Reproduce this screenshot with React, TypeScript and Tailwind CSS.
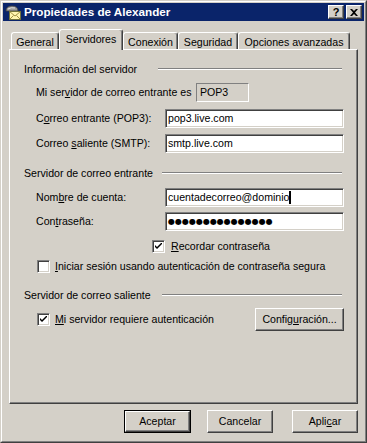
import React from "react";

const raised =
  "border border-t-white border-l-white border-r-[#404040] border-b-[#404040] shadow-[inset_-1px_-1px_0_#808080]";
const sunken =
  "border border-t-[#808080] border-l-[#808080] border-r-white border-b-white shadow-[inset_1px_1px_0_#404040,inset_-1px_-1px_0_#d4d0c8]";

const tabs = [
  { label: "General", cls: "w-[48px] ml-[2px]" },
  { label: "Servidores", cls: "w-[64px]", active: true },
  { label: "Conexión", cls: "w-[55px]" },
  { label: "Seguridad", cls: "w-[60px]" },
  { label: "Opciones avanzadas", cls: "w-[112px]" },
];

const MailIcon = () => (
  <svg width="16" height="16" viewBox="0 0 16 16">
    <path d="M1 7 Q1 2 7 2 Q13 2 13 7 Z" fill="#9a9a9a" stroke="#404040" strokeWidth="0.8" />
    <path d="M3 5 Q6 3 10 4" stroke="#e0e0e0" strokeWidth="1" fill="none" />
    <rect x="4.5" y="7.5" width="11" height="8" fill="#fff6b0" stroke="#6b6b2a" strokeWidth="0.8" />
    <path d="M4.5 7.5 L10 12 L15.5 7.5 M4.5 15.5 L8.5 11.5 M15.5 15.5 L11.5 11.5" stroke="#8a7a2a" strokeWidth="0.8" fill="none" />
  </svg>
);

const Check = () => (
  <svg width="7" height="7" viewBox="0 0 7 7">
    <path d="M0 2 L0 4 L2 6 L7 1 L7 -1 L2 4 Z" fill="#000" />
  </svg>
);

const Checkbox = ({ checked }: { checked?: boolean }) => (
  <div className={`w-[13px] h-[13px] shrink-0 bg-white flex items-center justify-center ${sunken}`}>
    {checked && <Check />}
  </div>
);

const GroupHeader = ({ label, line, mt }: { label: string; line: string; mt: string }) => (
  <div className={`flex items-center h-[14px] pl-[14px] ${mt}`}>
    <span className="whitespace-nowrap">{label}</span>
    <div className={`ml-auto mr-[15px] h-[2px] border-t border-t-[#808080] border-b border-b-white ${line}`} />
  </div>
);

const Field = ({ children }: { children: React.ReactNode }) => (
  <div className={`w-[179px] h-[19px] bg-white flex items-center pl-[2px] whitespace-nowrap ${sunken}`}>{children}</div>
);

export default function App() {
  return (
    <div
      className="w-[367px] h-[443px] bg-[#d4d0c8] border border-t-[#d4d0c8] border-l-[#d4d0c8] border-r-[#404040] border-b-[#404040] text-[10.6px] text-black leading-none"
      style={{ fontFamily: '"Liberation Sans", Arial, sans-serif' }}
    >
      <div className="h-full border border-t-white border-l-white border-r-[#808080] border-b-[#808080] p-[1px] flex flex-col">
        {/* title bar */}
        <div className="h-[18px] bg-[#0a246a] flex items-center pl-[2px]">
          <MailIcon />
          <span className="ml-[3px] text-white font-bold text-[11.7px]">Propiedades de Alexander</span>
          <div className="ml-auto flex gap-[2px] mr-[2px]">
            <div className={`w-[16px] h-[14px] bg-[#d4d0c8] flex items-center justify-center font-bold text-[11px] ${raised}`}>
              ?
            </div>
            <div className={`w-[16px] h-[14px] bg-[#d4d0c8] flex items-center justify-center ${raised}`}>
              <svg width="8" height="7" viewBox="0 0 8 7">
                <path d="M0 0 H2 L4 2 L6 0 H8 L5 3.5 L8 7 H6 L4 5 L2 7 H0 L3 3.5 Z" fill="#000" />
              </svg>
            </div>
          </div>
        </div>

        <div className="px-[6px] flex flex-col">
          {/* tabs */}
          <div className="relative z-10 mt-[8px] h-[21px] flex items-end">
            {tabs.map((t) => (
              <div
                key={t.label}
                className={`${t.cls} ${
                  t.active ? "h-[21px] pt-[4px]" : "h-[17px] mb-[1px] pt-[4px]"
                } bg-[#d4d0c8] border-l border-t border-r border-l-white border-t-white border-r-[#404040] rounded-t-[3px] shadow-[inset_-1px_0_0_#808080] flex justify-center whitespace-nowrap`}
              >
                {t.label}
              </div>
            ))}
          </div>

          {/* panel */}
          <div className="-mt-[1px] h-[355px] border border-t-white border-l-white border-r-[#404040] border-b-[#404040] shadow-[inset_-1px_-1px_0_#808080] flex flex-col">
            <GroupHeader label="Información del servidor" line="w-[184px]" mt="mt-[12px]" />

            <div className="mt-[7px] h-[19px] flex items-center pl-[26px] whitespace-nowrap">
              <span className="w-[160px]">
                Mi ser<u>v</u>idor de correo entrante es
              </span>
              <div className="w-[53px] h-[19px] border border-t-[#808080] border-l-[#808080] border-r-white border-b-white flex items-center pl-[3px]">
                POP3
              </div>
            </div>

            <div className="mt-[7px] h-[19px] flex items-center pl-[26px] whitespace-nowrap">
              <span className="w-[129px]">
                C<u>o</u>rreo entrante (POP3):
              </span>
              <Field>pop3.live.com</Field>
            </div>

            <div className="mt-[6px] h-[19px] flex items-center pl-[26px] whitespace-nowrap">
              <span className="w-[129px]">
                Correo <u>s</u>aliente (SMTP):
              </span>
              <Field>smtp.live.com</Field>
            </div>

            <GroupHeader label="Servidor de correo entrante" line="w-[180px]" mt="mt-[13px]" />

            <div className="mt-[8px] h-[19px] flex items-center pl-[26px] whitespace-nowrap">
              <span className="w-[129px]">
                Nom<u>b</u>re de cuenta:
              </span>
              <Field>
                cuentadecorreo@dominio
                <span className="inline-block w-[2px] h-[13px] bg-black" />
              </Field>
            </div>

            <div className="mt-[5px] h-[19px] flex items-center pl-[26px] whitespace-nowrap">
              <span className="w-[129px]">
                Con<u>t</u>raseña:
              </span>
              <Field>
                <span className="text-[8px]" style={{ fontFamily: '"DejaVu Sans", sans-serif' }}>
                  ●●●●●●●●●●●●●●●
                </span>
              </Field>
            </div>

            <div className="mt-[9px] h-[13px] flex items-center pl-[142px] gap-[6px] whitespace-nowrap">
              <Checkbox checked />
              <span>
                <u>R</u>ecordar contraseña
              </span>
            </div>

            <div className="mt-[7px] h-[13px] flex items-center pl-[27px] gap-[5px] whitespace-nowrap">
              <Checkbox />
              <span>
                <u>I</u>niciar sesión usando autenticación de contraseña segura
              </span>
            </div>

            <GroupHeader label="Servidor de correo saliente" line="w-[180px]" mt="mt-[15px]" />

            <div className="mt-[6px] h-[23px] flex items-center pl-[27px] gap-[5px] whitespace-nowrap">
              <Checkbox checked />
              <span>
                <u>M</u>i servidor requiere autenticación
              </span>
              <div className={`ml-auto mr-[13px] w-[89px] h-[23px] flex items-center justify-center ${raised}`}>
                Config<u>u</u>ración...
              </div>
            </div>
          </div>

          {/* dialog buttons */}
          <div className="mt-[6px] flex">
            <div className="ml-[115px] w-[67px] h-[23px] border border-black">
              <div className={`h-full flex items-center justify-center ${raised}`}>Aceptar</div>
            </div>
            <div className={`ml-[16px] w-[66px] h-[23px] flex items-center justify-center ${raised}`}>Cancelar</div>
            <div className={`ml-[19px] w-[66px] h-[23px] flex items-center justify-center ${raised}`}>
              Apli<u>c</u>ar
            </div>
          </div>
        </div>
      </div>
    </div>
  );
}
